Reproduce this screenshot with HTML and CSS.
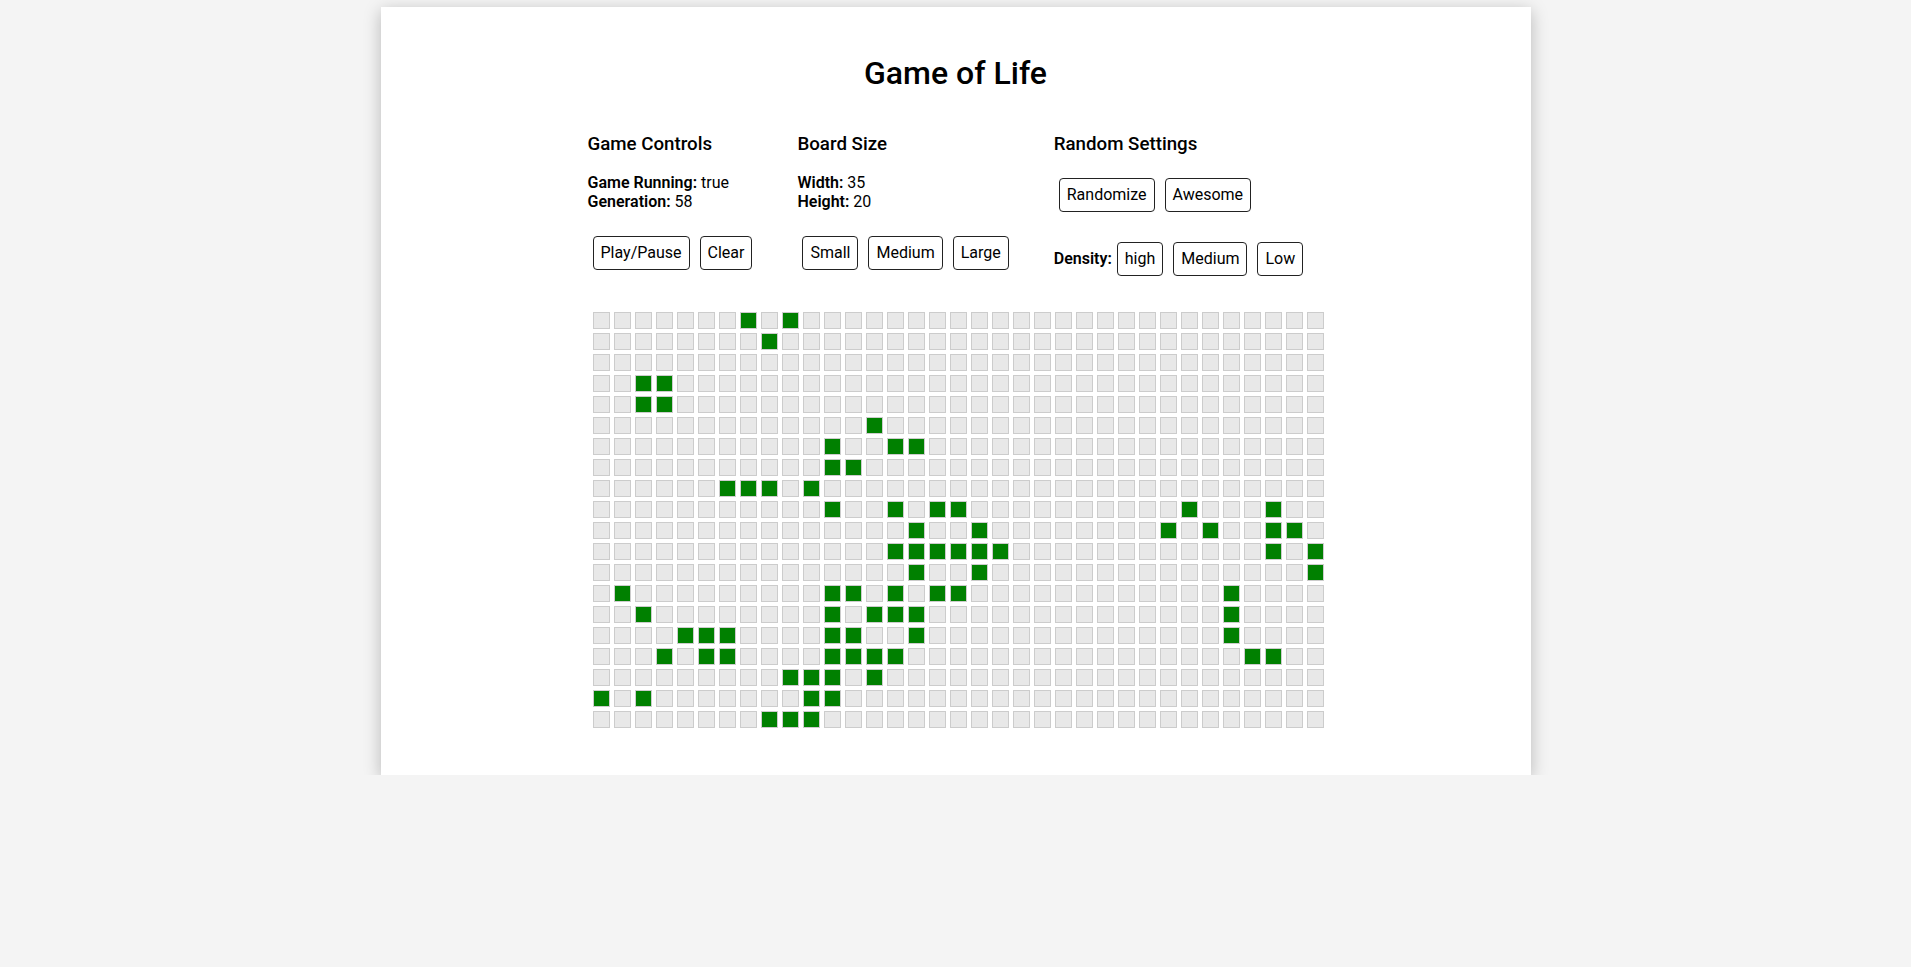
FILE: index.html
```html
<!DOCTYPE html>
<html lang="en">
<head>
<meta charset="utf-8">
<title>Game of Life</title>
<link rel="stylesheet" href="styles.css">
</head>
<body>
<div class="app">
  <h1 class="title">Game of Life</h1>
  <div class="main">
    <div class="controls">
      <section class="panel">
        <h3 class="panel-title">Game Controls</h3>
        <p class="info"><strong>Game Running:</strong> true<br><strong>Generation:</strong> 58</p>
        <div class="btn-row spaced">
          <button class="btn">Play/Pause</button><button class="btn">Clear</button>
        </div>
      </section>
      <section class="panel">
        <h3 class="panel-title">Board Size</h3>
        <p class="info"><strong>Width:</strong> 35<br><strong>Height:</strong> 20</p>
        <div class="btn-row spaced">
          <button class="btn">Small</button><button class="btn">Medium</button><button class="btn">Large</button>
        </div>
      </section>
      <section class="panel">
        <h3 class="panel-title">Random Settings</h3>
        <div class="btn-row">
          <button class="btn">Randomize</button><button class="btn">Awesome</button>
        </div>
        <div class="btn-row spaced density">
          <strong class="label">Density:</strong><button class="btn">high</button><button class="btn">Medium</button><button class="btn">Low</button>
        </div>
      </section>
    </div>
    <div class="grid">
<i></i><i></i><i></i><i></i><i></i><i></i><i></i><b></b><i></i><b></b><i></i><i></i><i></i><i></i><i></i><i></i><i></i><i></i><i></i><i></i><i></i><i></i><i></i><i></i><i></i><i></i><i></i><i></i><i></i><i></i><i></i><i></i><i></i><i></i><i></i>
<i></i><i></i><i></i><i></i><i></i><i></i><i></i><i></i><b></b><i></i><i></i><i></i><i></i><i></i><i></i><i></i><i></i><i></i><i></i><i></i><i></i><i></i><i></i><i></i><i></i><i></i><i></i><i></i><i></i><i></i><i></i><i></i><i></i><i></i><i></i>
<i></i><i></i><i></i><i></i><i></i><i></i><i></i><i></i><i></i><i></i><i></i><i></i><i></i><i></i><i></i><i></i><i></i><i></i><i></i><i></i><i></i><i></i><i></i><i></i><i></i><i></i><i></i><i></i><i></i><i></i><i></i><i></i><i></i><i></i><i></i>
<i></i><i></i><b></b><b></b><i></i><i></i><i></i><i></i><i></i><i></i><i></i><i></i><i></i><i></i><i></i><i></i><i></i><i></i><i></i><i></i><i></i><i></i><i></i><i></i><i></i><i></i><i></i><i></i><i></i><i></i><i></i><i></i><i></i><i></i><i></i>
<i></i><i></i><b></b><b></b><i></i><i></i><i></i><i></i><i></i><i></i><i></i><i></i><i></i><i></i><i></i><i></i><i></i><i></i><i></i><i></i><i></i><i></i><i></i><i></i><i></i><i></i><i></i><i></i><i></i><i></i><i></i><i></i><i></i><i></i><i></i>
<i></i><i></i><i></i><i></i><i></i><i></i><i></i><i></i><i></i><i></i><i></i><i></i><i></i><b></b><i></i><i></i><i></i><i></i><i></i><i></i><i></i><i></i><i></i><i></i><i></i><i></i><i></i><i></i><i></i><i></i><i></i><i></i><i></i><i></i><i></i>
<i></i><i></i><i></i><i></i><i></i><i></i><i></i><i></i><i></i><i></i><i></i><b></b><i></i><i></i><b></b><b></b><i></i><i></i><i></i><i></i><i></i><i></i><i></i><i></i><i></i><i></i><i></i><i></i><i></i><i></i><i></i><i></i><i></i><i></i><i></i>
<i></i><i></i><i></i><i></i><i></i><i></i><i></i><i></i><i></i><i></i><i></i><b></b><b></b><i></i><i></i><i></i><i></i><i></i><i></i><i></i><i></i><i></i><i></i><i></i><i></i><i></i><i></i><i></i><i></i><i></i><i></i><i></i><i></i><i></i><i></i>
<i></i><i></i><i></i><i></i><i></i><i></i><b></b><b></b><b></b><i></i><b></b><i></i><i></i><i></i><i></i><i></i><i></i><i></i><i></i><i></i><i></i><i></i><i></i><i></i><i></i><i></i><i></i><i></i><i></i><i></i><i></i><i></i><i></i><i></i><i></i>
<i></i><i></i><i></i><i></i><i></i><i></i><i></i><i></i><i></i><i></i><i></i><b></b><i></i><i></i><b></b><i></i><b></b><b></b><i></i><i></i><i></i><i></i><i></i><i></i><i></i><i></i><i></i><i></i><b></b><i></i><i></i><i></i><b></b><i></i><i></i>
<i></i><i></i><i></i><i></i><i></i><i></i><i></i><i></i><i></i><i></i><i></i><i></i><i></i><i></i><i></i><b></b><i></i><i></i><b></b><i></i><i></i><i></i><i></i><i></i><i></i><i></i><i></i><b></b><i></i><b></b><i></i><i></i><b></b><b></b><i></i>
<i></i><i></i><i></i><i></i><i></i><i></i><i></i><i></i><i></i><i></i><i></i><i></i><i></i><i></i><b></b><b></b><b></b><b></b><b></b><b></b><i></i><i></i><i></i><i></i><i></i><i></i><i></i><i></i><i></i><i></i><i></i><i></i><b></b><i></i><b></b>
<i></i><i></i><i></i><i></i><i></i><i></i><i></i><i></i><i></i><i></i><i></i><i></i><i></i><i></i><i></i><b></b><i></i><i></i><b></b><i></i><i></i><i></i><i></i><i></i><i></i><i></i><i></i><i></i><i></i><i></i><i></i><i></i><i></i><i></i><b></b>
<i></i><b></b><i></i><i></i><i></i><i></i><i></i><i></i><i></i><i></i><i></i><b></b><b></b><i></i><b></b><i></i><b></b><b></b><i></i><i></i><i></i><i></i><i></i><i></i><i></i><i></i><i></i><i></i><i></i><i></i><b></b><i></i><i></i><i></i><i></i>
<i></i><i></i><b></b><i></i><i></i><i></i><i></i><i></i><i></i><i></i><i></i><b></b><i></i><b></b><b></b><b></b><i></i><i></i><i></i><i></i><i></i><i></i><i></i><i></i><i></i><i></i><i></i><i></i><i></i><i></i><b></b><i></i><i></i><i></i><i></i>
<i></i><i></i><i></i><i></i><b></b><b></b><b></b><i></i><i></i><i></i><i></i><b></b><b></b><i></i><i></i><b></b><i></i><i></i><i></i><i></i><i></i><i></i><i></i><i></i><i></i><i></i><i></i><i></i><i></i><i></i><b></b><i></i><i></i><i></i><i></i>
<i></i><i></i><i></i><b></b><i></i><b></b><b></b><i></i><i></i><i></i><i></i><b></b><b></b><b></b><b></b><i></i><i></i><i></i><i></i><i></i><i></i><i></i><i></i><i></i><i></i><i></i><i></i><i></i><i></i><i></i><i></i><b></b><b></b><i></i><i></i>
<i></i><i></i><i></i><i></i><i></i><i></i><i></i><i></i><i></i><b></b><b></b><b></b><i></i><b></b><i></i><i></i><i></i><i></i><i></i><i></i><i></i><i></i><i></i><i></i><i></i><i></i><i></i><i></i><i></i><i></i><i></i><i></i><i></i><i></i><i></i>
<b></b><i></i><b></b><i></i><i></i><i></i><i></i><i></i><i></i><i></i><b></b><b></b><i></i><i></i><i></i><i></i><i></i><i></i><i></i><i></i><i></i><i></i><i></i><i></i><i></i><i></i><i></i><i></i><i></i><i></i><i></i><i></i><i></i><i></i><i></i>
<i></i><i></i><i></i><i></i><i></i><i></i><i></i><i></i><b></b><b></b><b></b><i></i><i></i><i></i><i></i><i></i><i></i><i></i><i></i><i></i><i></i><i></i><i></i><i></i><i></i><i></i><i></i><i></i><i></i><i></i><i></i><i></i><i></i><i></i><i></i>
    </div>
  </div>
</div>
</body>
</html>
```
FILE: styles.css
```css
html, body {
  margin: 0;
  padding: 0;
}

body {
  background: #f4f4f4;
  font-family: Roboto, "Liberation Sans", Arial, sans-serif;
  font-size: 16px;
  color: #000;
}

.app {
  width: 1150px;
  margin: 7px auto 0;
  padding: 26px 0 47px;
  box-sizing: border-box;
  background: #fff;
  box-shadow: 0 4px 16px rgba(0, 0, 0, 0.25);
}

.title {
  margin: 21.44px 0;
  font-size: 32px;
  font-weight: 500;
  text-align: center;
  line-height: normal;
}

.main {
  padding-left: 207px;
}

.controls {
  display: flex;
  gap: 40px;
  align-items: flex-start;
}

.panel-title {
  margin: 18.72px 0;
  font-size: 18.72px;
  font-weight: 500;
}

.info {
  margin: 0;
  line-height: normal;
}

.info strong,
.label {
  font-weight: 600;
}

.btn-row {
  display: flex;
  align-items: baseline;
}

.btn-row.spaced {
  margin-top: 20px;
}

.btn {
  margin: 5px;
  padding: 6px 7px;
  font: inherit;
  line-height: 20px;
  color: #000;
  background: #fff;
  border: 1px solid #222;
  border-radius: 4px;
}

.grid {
  display: grid;
  grid-template-columns: repeat(35, 17px);
  grid-auto-rows: 17px;
  gap: 4px;
  width: max-content;
  margin: 31px 0 0 5px;
}

.grid i,
.grid b {
  display: block;
  box-sizing: border-box;
  border: 1px solid #ccc;
  background: #e8e8e8;
}

.grid b {
  background: #008000;
}
```
